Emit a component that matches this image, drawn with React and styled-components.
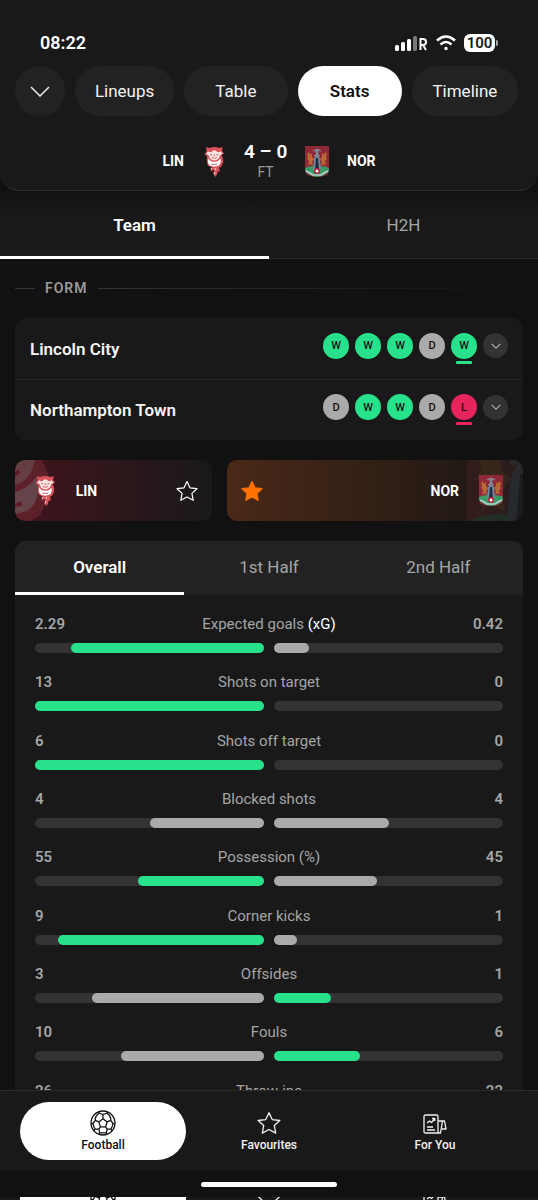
import React from "react";
import styled, { createGlobalStyle, css } from "styled-components";

const Global = createGlobalStyle`
  * { box-sizing: border-box; }
  body { margin: 0; background: #111; color: #f5f5f5; font-family: Roboto, "Liberation Sans", sans-serif; }
  button { font: inherit; color: inherit; border: 0; background: none; padding: 0; cursor: pointer; }
  h1, h2, h3, p, ul { margin: 0; padding: 0; font: inherit; list-style: none; }
  svg { display: block; flex: none; }
`;

const Screen = styled.div`
  height: 100vh;
  display: flex;
  flex-direction: column;
  overflow: hidden;
`;

const Header = styled.header`
  flex: none;
  padding-top: 27px;
  background: #191919;
  border-bottom: 1px solid #303030;
  border-radius: 0 0 20px 20px;
`;

const StatusBar = styled.div`
  display: flex;
  justify-content: space-between;
  align-items: center;
  height: 31px;
  padding: 0 40px;
  font-size: 18px;
  font-weight: 600;
  color: #fff;
`;

const Signals = styled.div`
  display: flex;
  align-items: center;
  gap: 8px;
`;

const Battery = styled.span`
  display: flex;
  align-items: center;
  justify-content: center;
  width: 31px;
  height: 18px;
  border-radius: 6px;
  background: #fff;
  color: #191919;
  font-size: 15px;
  line-height: 18px;
`;

const Cell = styled.span`
  display: flex;
  align-items: center;
  gap: 1px;
  &::after {
    content: "";
    width: 2px;
    height: 6px;
    border-radius: 0 2px 2px 0;
    background: #aaa;
  }
`;

const PillRow = styled.nav`
  display: flex;
  gap: 10px;
  padding: 8px 20px 0 15px;
`;

const Pill = styled.button`
  flex: 1 1 ${(p) => p.$basis}px;
  height: 50px;
  border-radius: 25px;
  font-size: 17px;
  background: ${(p) => (p.$active ? "#fff" : "#222")};
  color: ${(p) => (p.$active ? "#111" : "#f2f2f2")};
  font-weight: ${(p) => (p.$active ? 600 : 400)};
`;

const BackPill = styled(Pill)`
  flex: none;
  width: 50px;
  display: grid;
  place-items: center;
`;

const Score = styled.div`
  display: grid;
  grid-template-columns: 1fr auto auto auto 1fr;
  align-items: center;
  padding: 20px 7px 4px 0;
  height: 74px;
  color: #fff;
`;

const Code = styled.span`
  font-size: 14px;
  font-weight: 700;
  text-align: ${(p) => p.$align || "left"};
`;

const ScoreLogo = styled.span`
  display: grid;
  place-items: center;
  width: 60px;
`;

const Result = styled.div`
  width: 43px;
  text-align: center;
  white-space: nowrap;
  font-size: 19px;
  line-height: 22px;
  font-weight: 600;
`;

const FullTime = styled.div`
  font-size: 14px;
  line-height: 18px;
  font-weight: 400;
  color: #999;
`;

const Main = styled.main`
  flex: 1;
  min-height: 0;
  overflow: hidden;
`;

const Tab = styled.button`
  flex: 1 1 0;
  height: 68px;
  padding-top: 2px;
  margin-bottom: -1px;
  font-size: 17px;
  color: ${(p) => (p.$active ? "#fff" : "#a5a5a5")};
  font-weight: ${(p) => (p.$active ? 600 : 400)};
  border-bottom: 3px solid ${(p) => (p.$active ? "#fff" : "transparent")};
`;

const Tabs = styled.div`
  display: flex;
  background: linear-gradient(#121212, #191919 20px);
  border-bottom: 1px solid #2a2a2a;
`;

const PanelTabs = styled.div`
  display: flex;
  background: #222;
  border-radius: 10px 10px 0 0;
  ${Tab} { height: 54px; margin: 0; padding: 0; }
`;

const Content = styled.div`
  padding: 19px 15px 0;
`;

const SectionTitle = styled.h2`
  display: flex;
  align-items: center;
  gap: 10px;
  font-size: 14px;
  line-height: 20px;
  font-weight: 600;
  letter-spacing: 1px;
  color: #9b9b9b;
  &::before { content: ""; width: 20px; height: 1px; background: #333; }
  &::after { content: ""; flex: 1; height: 1px; background: linear-gradient(90deg, #333, #111); }
`;

const FormCard = styled.ul`
  margin-top: 20px;
  border-radius: 10px;
  background: #191919;
`;

const FormRow = styled.li`
  display: flex;
  align-items: center;
  justify-content: space-between;
  height: 61px;
  padding: 0 15px;
  font-size: 17px;
  font-weight: 600;
  & + & { border-top: 1px solid #252525; }
`;

const Results = styled.div`
  display: flex;
  align-items: center;
  gap: 6px;
  padding-bottom: 6px;
`;

const tones = { W: "#27e28b", D: "#aaa", L: "#e8245c" };

const Badge = styled.span`
  position: relative;
  display: grid;
  place-items: center;
  width: 26px;
  height: 26px;
  border-radius: 50%;
  background: ${(p) => tones[p.$r]};
  color: #111;
  font-size: 11px;
  font-weight: 500;
  ${(p) => p.$latest && css`
    &::after {
      content: "";
      position: absolute;
      left: 5px;
      right: 5px;
      bottom: -5px;
      height: 3px;
      border-radius: 1px;
      background: ${tones[p.$r]};
    }
  `}
`;

const Expand = styled.button`
  display: grid;
  place-items: center;
  width: 25px;
  height: 25px;
  border-radius: 50%;
  background: #333;
`;

const Follow = styled.div`
  display: grid;
  grid-template-columns: 2fr 3fr;
  gap: 15px;
  margin: 20px 0;
`;

const FollowCard = styled.button`
  position: relative;
  overflow: hidden;
  display: flex;
  align-items: center;
  gap: 20px;
  height: 61px;
  padding: ${(p) => (p.$home ? "0 13px 0 20px" : "0 20px 0 13px")};
  border-radius: 10px;
  color: #fff;
  background: ${(p) => p.$home
    ? "linear-gradient(90deg, #42151d, #191919)"
    : "linear-gradient(90deg, #4a2917, #2a1c15 65%, #191919)"};
  > * { position: relative; }
`;

const Spacer = styled.span`
  flex: 1;
`;

const Ghost = styled.span`
  && { position: absolute; }
  top: -44px;
  ${(p) => (p.$home ? "left: -58px;" : "right: -60px;")}
  opacity: ${(p) => (p.$home ? 0.2 : 0.15)};
`;

const Panel = styled.section`
  border-radius: 10px 10px 0 0;
  background: #191919;
`;

const StatList = styled.ul`
  display: grid;
  grid-auto-rows: 1fr;
  min-height: 543px;
  padding: 18px 20px 0;
`;

const StatHead = styled.div`
  display: grid;
  grid-template-columns: 1fr auto 1fr;
  font-size: 15px;
  line-height: 22px;
  color: #a5a5a5;
`;

const StatValue = styled.span`
  font-weight: 600;
  text-align: ${(p) => p.$align || "left"};
`;

const Strong = styled.span`
  color: #fff;
`;

const Bars = styled.div`
  display: grid;
  grid-template-columns: 1fr 1fr;
  gap: 10px;
  margin-top: 8px;
`;

const Track = styled.div`
  display: flex;
  justify-content: ${(p) => (p.$home ? "flex-end" : "flex-start")};
  height: 10px;
  border-radius: 5px;
  background: #333;
`;

const Fill = styled.div`
  height: 10px;
  border-radius: 5px;
  background: ${(p) => (p.$lead ? "#27e28b" : "#aaa")};
`;

const BottomNav = styled.nav`
  flex: none;
  display: flex;
  height: 80px;
  padding: 11px 20px;
  background: #191919;
  border-top: 1px solid #2a2a2a;
`;

const NavItem = styled.button`
  flex: 1 1 0;
  display: flex;
  flex-direction: column;
  align-items: center;
  justify-content: center;
  gap: 1px;
  height: 58px;
  border-radius: 29px;
  font-size: 12px;
  line-height: 16px;
  font-weight: 500;
  background: ${(p) => (p.$active ? "#fff" : "transparent")};
  color: ${(p) => (p.$active ? "#111" : "#f2f2f2")};
`;

const HomeArea = styled.div`
  flex: none;
  height: 27px;
  display: flex;
  justify-content: center;
  padding-top: 12px;
`;

const HomeBar = styled.div`
  width: 136px;
  height: 5px;
  border-radius: 3px;
  background: #fff;
`;

const Peek = styled.div`
  flex: none;
  display: flex;
  height: 3px;
  overflow: hidden;
  padding: 0 20px;
  background: #191919;
`;

const PeekCell = styled.span`
  flex: 1 1 0;
  display: flex;
  align-items: center;
  justify-content: center;
  background: ${(p) => (p.$active ? "#fff" : "transparent")};
  color: ${(p) => (p.$active ? "#111" : "#f2f2f2")};
`;

const Chevron = ({ w, h }) => (
  <svg width={w} height={h} viewBox="0 0 20 11" fill="none" stroke="#eee" strokeWidth={w > 12 ? 1.5 : 2}>
    <path d="M1 1l9 9 9-9" />
  </svg>
);

const Star = ({ size = 24, filled }) => (
  <svg width={size} height={size} viewBox="0 0 24 24" fill={filled ? "#ff7200" : "none"} stroke={filled ? "#ff7200" : "currentColor"} strokeWidth="1.2" strokeLinejoin="round">
    <path d="M12 2.5l3 6.300 7 .9-5.100 4.700 1.300 6.900L12 18l-6.200 3.300 1.300-6.900L2 9.700l7-.9z" />
  </svg>
);

const Ball = () => (
  <svg width="26" height="26" viewBox="0 0 26 26" fill="none" stroke="currentColor" strokeWidth="1.3" strokeLinejoin="round">
    <circle cx="13" cy="13" r="12" />
    <path d="M13 8.800l4.200 3.100-1.600 5h-5.200l-1.600-5zM13 8.800V4.500M17.200 11.900l3.500-1.600M15.600 16.900l1.600 2.300M10.400 16.900l-1.600 2.300M8.800 11.900l-3.500-1.600" />
    <path d="M8.500 2l.5 1.200 4 1.300 4-1.300.5-1.200M9 3.200C7 4.500 5.500 6.500 5.200 8.800l.1 1.500L3 13.500l-2 .2M17 3.200c2 1.300 3.500 3.300 3.800 5.600l-.1 1.500 2.300 3.200 2 .2M3 13.500c.2 2 .9 3.800 2 5.400l3.800.3.900 3.600M5 18.900l-1 1.800M23 13.500c-.2 2-.9 3.800-2 5.400l-3.800.3-.9 3.600M21 18.900l1 1.800M9.700 22.800h6.600M9.700 22.800l-.7 1.500M16.300 22.800l.7 1.500" />
  </svg>
);

const NewsIcon = () => (
  <svg width="24" height="26" viewBox="0 -4 24 26" fill="none" stroke="currentColor" strokeWidth="1.3" strokeLinejoin="round">
    <path d="M2.500 1h11Q15 1 15 2.500V19H2.500Q1 19 1 17.500v-15Q1 1 2.500 1zM15 7h6.500l1.500 8h-4M15 19h2.500l2-12M4 13h6M4 16h8" />
    <path d="M4 9l2.500-2 2 1.500L11.500 5M9 4.500h2.800V7" />
  </svg>
);

const ImpCrest = ({ h = 31 }) => (
  <svg width={h * 2 / 3} height={h} viewBox="0 0 20 30" role="img" aria-label="Lincoln City">
    <path d="M2 1l3 1q5-2 10 0l3-1-.5 4 2 2-2.500 2q2 3 1.500 7l-2 4-2 1 1 4-2-.5-1 3-1.500 2.500L9 27l1-4-4 2 2-4-4-2q-2-3-1-9L.5 8l2-3z" fill="#d8525a" />
    <path d="M4 5q2 2 4 0 2-2 4 0 2 2 4 0l2 2.500-2.500 1.500q-1 5-5.500 5t-5.500-5L2 7.500z" fill="#fbe6e0" />
    <path d="M4 12q3 4 6 3 3 1 6-3 1 5-2 7l-4 1-4-1q-3-2-2-7z" fill="#fff" />
    <path d="M6 8l2 1M14 8l-2 1M7.500 11q2.500 2 5 0M10 8v2M10 21v4M7 17.500q3 1 6 0" fill="none" stroke="#c8434b" strokeWidth=".8" />
    <path d="M10 22l2-1-1 3zM9.500 26l1.500-1-.5 3zM6 22l2-1-.5 2z" fill="#fbd4d0" />
  </svg>
);

const CobblersCrest = ({ h = 31 }) => (
  <svg width={h * 24 / 31} height={h} viewBox="0 0 24 31" role="img" aria-label="Northampton Town">
    <path d="M0 0h24v24l-1 4q-4 3-11 3T1 28l-1-4z" fill="#8f2937" />
    <path d="M0 22q5-3 12-1 7-2 12 1v3q-4 5-12 6-8-1-12-6z" fill="#399b64" />
    <path d="M2 8l2-2 1 3 2-2v4l2 2-2 3 1 4-3-2-2 2 1-5-2-2 1-2zM22 8l-2-2-1 3-2-2v4l-2 2 2 3-1 4 3-2 2 2-1-5 2-2-1-2z" fill="#b86a34" />
    <path d="M10 4h4l-1 4 2 5 1 11H8l1-11 2-5z" fill="#72869c" />
    <path d="M11 12h2l1 12h-4z" fill="#202b3d" />
    <path d="M8 5l4-2 4 2M9 10l3-2 3 2" fill="none" stroke="#8f969c" />
    <path d="M1 25l4 2 3 2h8l3-2 4-2" fill="none" stroke="#b7cfd0" strokeWidth="1.600" />
    <circle cx="12" cy="25" r="3" fill="#b5213a" /><circle cx="12" cy="25" r="1.500" fill="#fff" />
  </svg>
);

const stats = [
  ["2.29", "Expected goals", "0.42", 84.5, 15.5],
  ["13", "Shots on target", "0", 100, 0],
  ["6", "Shots off target", "0", 100, 0],
  ["4", "Blocked shots", "4", 50, 50],
  ["55", "Possession (%)", "45", 55, 45],
  ["9", "Corner kicks", "1", 90, 10],
  ["3", "Offsides", "1", 75, 25, "away"],
  ["10", "Fouls", "6", 62.5, 37.5, "away"],
  ["26", "Throw-ins", "22", 54, 46],
];

const form = [
  ["Lincoln City", "WWWDW"],
  ["Northampton Town", "DWWDL"],
];

function Stat({ row }) {
  const [home, label, away, hp, ap, lead] = row;
  return (
    <li>
      <StatHead>
        <StatValue>{home}</StatValue>
        <span>{label}{label === "Expected goals" && <Strong> (xG)</Strong>}</span>
        <StatValue $align="right">{away}</StatValue>
      </StatHead>
      <Bars>
        <Track $home><Fill $lead={!lead && hp > ap} style={{ width: `${hp}%` }} /></Track>
        <Track><Fill $lead={lead === "away"} style={{ width: `${ap}%` }} /></Track>
      </Bars>
    </li>
  );
}

export default function App() {
  return (
    <Screen>
      <Global />
      <Header>
        <StatusBar>
          <span>08:22</span>
          <Signals>
            <svg width="33" height="16" viewBox="0 0 33 16" fill="#fff">
              <rect x="0" y="10" width="4" height="6" rx="1.500" /><rect x="6" y="7" width="4" height="9" rx="1.500" />
              <rect x="12" y="4" width="4" height="12" rx="1.500" /><rect x="18" y="1" width="4" height="15" rx="1.500" fill="#777" />
              <path d="M25.500 15V4h2.500q3 0 3 3t-3 3h-2.500M28 10l3 5" fill="none" stroke="#fff" strokeWidth="2" />
            </svg>
            <svg width="20" height="16" viewBox="0 0 20 16" fill="none" stroke="#fff" strokeWidth="2.600">
              <path d="M1 5.500q9-8 18 0M4.500 9.500q5.500-5 11 0" /><circle cx="10" cy="13.500" r="1" fill="#fff" strokeWidth="1.500" />
            </svg>
            <Cell><Battery>100</Battery></Cell>
          </Signals>
        </StatusBar>
        <PillRow>
          <BackPill aria-label="Back"><Chevron w={20} h={11} /></BackPill>
          <Pill $basis={99}>Lineups</Pill>
          <Pill $basis={103}>Table</Pill>
          <Pill $basis={104} $active>Stats</Pill>
          <Pill $basis={106}>Timeline</Pill>
        </PillRow>
        <Score>
          <Code $align="right">LIN</Code>
          <ScoreLogo><ImpCrest /></ScoreLogo>
          <Result>4 – 0<FullTime>FT</FullTime></Result>
          <ScoreLogo><CobblersCrest /></ScoreLogo>
          <Code>NOR</Code>
        </Score>
      </Header>
      <Main>
        <Tabs><Tab $active>Team</Tab><Tab>H2H</Tab></Tabs>
        <Content>
          <SectionTitle>FORM</SectionTitle>
          <FormCard>
            {form.map(([team, results]) => (
              <FormRow key={team}>
                <span>{team}</span>
                <Results>
                  {[...results].map((r, i) => <Badge key={i} $r={r} $latest={i === 4}>{r}</Badge>)}
                  <Expand aria-label={`Show ${team} form`}><Chevron w={10} h={6} /></Expand>
                </Results>
              </FormRow>
            ))}
          </FormCard>
          <Follow>
            <FollowCard $home>
              <Ghost $home aria-hidden="true"><ImpCrest h={150} /></Ghost>
              <ImpCrest /><Code>LIN</Code><Spacer /><Star />
            </FollowCard>
            <FollowCard>
              <Ghost aria-hidden="true"><CobblersCrest h={150} /></Ghost>
              <Star filled /><Spacer /><Code>NOR</Code><CobblersCrest />
            </FollowCard>
          </Follow>
          <Panel>
            <PanelTabs><Tab $active>Overall</Tab><Tab>1st Half</Tab><Tab>2nd Half</Tab></PanelTabs>
            <StatList>{stats.map((row) => <Stat key={row[1]} row={row} />)}</StatList>
          </Panel>
        </Content>
      </Main>
      <BottomNav>
        <NavItem $active><Ball />Football</NavItem>
        <NavItem><Star size={26} />Favourites</NavItem>
        <NavItem><NewsIcon />For You</NavItem>
      </BottomNav>
      <HomeArea><HomeBar /></HomeArea>
      <Peek aria-hidden="true">
        <PeekCell $active><Ball /></PeekCell>
        <PeekCell><Star size={26} /></PeekCell>
        <PeekCell><NewsIcon /></PeekCell>
      </Peek>
    </Screen>
  );
}
